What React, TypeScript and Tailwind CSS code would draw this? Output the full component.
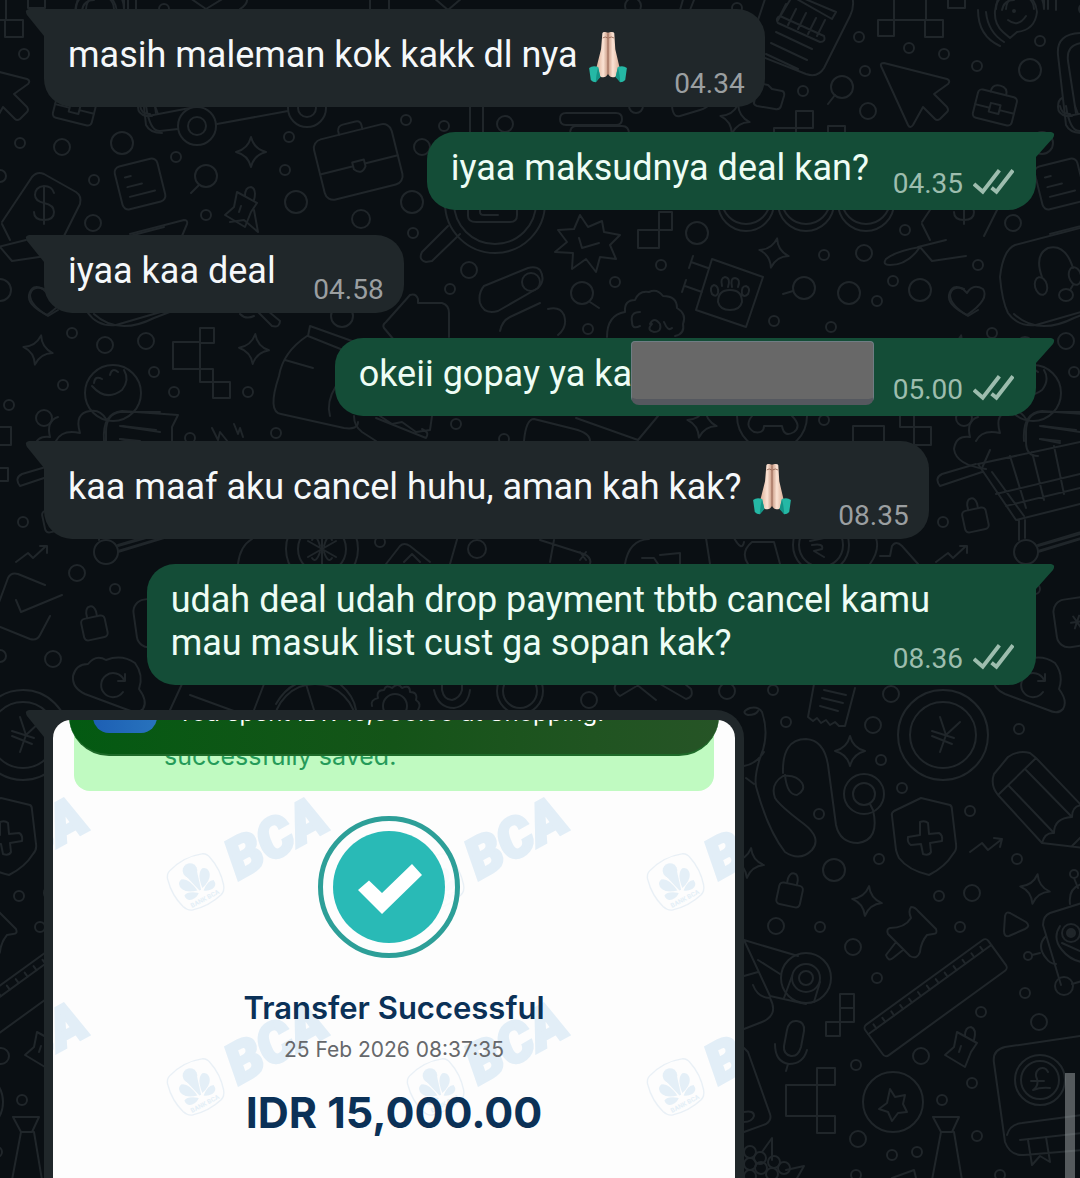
import type { ReactNode } from "react";

const TILE = 920;

// [cx, cy, r]
const dots: number[][] = [
  [24, 54, 5], [20, 143, 5], [62, 147, 8], [122, 143, 11], [176, 157, 5], [94, 180, 5], [93, 223, 8],
  [206, 215, 5], [296, 202, 11], [361, 219, 9], [412, 202, 11], [289, 137, 5], [285, 170, 5], [406, 120, 5],
  [444, 126, 5], [505, 124, 8], [422, 147, 8], [164, 9, 5], [0, 176, 6], [633, 6, 8], [737, 8, 5],
  [859, 37, 5], [909, 48, 5], [865, 71, 5], [803, 91, 5], [868, 111, 8], [57, 66, 5], [110, 70, 11],
  [120, 41, 5], [636, 106, 7], [0, 290, 11], [413, 233, 5], [469, 270, 8], [450, 289, 5], [72, 333, 5],
  [105, 345, 8], [146, 341, 8], [154, 372, 5], [63, 385, 5], [174, 392, 5], [248, 392, 5], [9, 405, 5],
  [44, 418, 8], [276, 433, 5], [190, 438, 5], [342, 316, 11], [456, 424, 5], [504, 439, 5], [23, 522, 5],
  [380, 542, 5], [531, 282, 9], [697, 233, 11], [661, 265, 5], [615, 282, 5], [824, 255, 5], [864, 253, 8],
  [893, 281, 5], [877, 301, 5], [849, 293, 11], [774, 321, 5], [831, 327, 5], [588, 329, 5], [905, 230, 5],
  [58, 265, 5], [824, 420, 5], [77, 573, 8], [115, 589, 5], [53, 659, 8], [0, 656, 6], [477, 549, 9],
  [589, 700, 8], [727, 691, 8], [773, 690, 5], [891, 694, 8], [786, 722, 5], [873, 725, 8], [881, 760, 5],
  [99, 729, 5], [902, 788, 5], [819, 814, 5], [879, 859, 5], [834, 870, 11], [50, 811, 5], [19, 896, 5],
  [52, 893, 8], [97, 859, 5], [40, 927, 5], [853, 947, 8], [877, 978, 5], [820, 927, 5], [776, 926, 8],
  [61, 1012, 5], [119, 1022, 8], [105, 993, 5], [1, 1056, 8], [856, 1065, 5], [52, 1083, 5], [22, 1100, 5],
  [57, 1136, 5], [858, 1139, 8], [892, 1155, 5], [917, 1152, 5], [144, 986, 9], [108, 956, 4], [154, 874, 4],
  [856, 1175, 5], [80, 1175, 5],
];

// [x, y, rotation]
const sparkles: number[][] = [
  [251, 152, 0], [735, 119, 12], [38, 350, 12], [254, 349, 5], [774, 253, 12], [702, 423, 12],
  [850, 751, 0], [867, 901, 8], [115, 889, 10], [749, 863, 8],
];

const squares: number[][] = [
  [5, 20, 18, 17], [878, 20, 16, 16], [28, -8, 17, 16], [796, 111, 17, 17], [828, 126, 17, 17],
  [774, 128, 22, 18], [638, 230, 21, 18], [659, 212, 13, 18], [200, 328, 14, 15], [173, 342, 27, 27],
  [200, 369, 13, 13], [213, 382, 17, 16], [-6, 468, 14, 13], [853, 426, 31, 30],
  [900, 410, 14, 17], [914, 427, 17, 18], [840, 994, 14, 14], [840, 1008, 14, 14], [826, 1022, 14, 14],
  [786, 1085, 31, 31], [817, 1068, 18, 17], [817, 1116, 18, 17],
];

const paths = [
  // joins between the pixel squares
  "M6 20V-4M894 20V-4M894 20H924M-26 20H5",
  // top edge scraps
  "M76 9a24 24 0 0 1 48 0M86 9a14 14 0 0 1 28 0M128 9V-4M136 9V-4M190 -2l16 11l18 -11M240 9q10 -6 6 -14M370 9V-4M389 9V-4M434 -2l14 12l14 -12",
  "M680 10l4 -14M690 10l4 -10",
  // bank slip
  "M766 -4L758 20M852 -4q3 10 -2 20L824 68q-6 10 -18 6L760 56M790 0L778 20M798 -4L836 12L832 19L795 -2M786 4l-8 16M796 9l-8 16M806 13l-8 16M816 18l-8 16M825 20l-8 16M780 16l44 20q2 6 -4 6l-42 -19q-3 -5 2 -7M776 32l36 17M771 43l36 17M766 54l32 15",
  // folder
  "M754 103l4 -20l10 2l4 4l10 2q3 1 2 5l-3 10q-1 4 -6 3l-18 -3q-4 -1 -3 -5",
  // cart frame
  "M217 124L288 111M140 106q2 9 10 8M146 106q4 26 14 25l18 -2M148 116l42 -8M155 106l3 8M672 106q1 12 8 10l20 -6q7 -2 9 -6",
  // upright posts, stacked books
  "M470 106V134M483 106V134M566 113h50q6 0 6 6t-6 6h-50q-6 0 -6 -6t6 -6M570 134q0 -8 6 -8h46q7 0 7 8",
  // tag with dollar
  "M2 222L32 177q5 -6 12 -3L76 192q6 4 4 12L64 236M10 240L2 224M54 193q-2 -7 -10 -7q-9 1 -9 9q0 6 9 8q10 2 10 9q0 8 -10 8q-10 0 -10 -8M44 187V224",
  // tag string
  "M26 240L-2 247M0 247l12 14L46 256M0 247q-24 4 -34 12q-4 6 4 6q18 0 30 -18",
  // big magnifier
  "M448 226L422 252q-4 8 4 10l6 -1L460 234M468 208v8q0 6 8 6h34q7 0 7 -7v-7M480 208v4q0 3 4 3h14",
  // paper plane
  "M130 234L184 220q4 0 3 4L182 236M230 222l14 -2l14 12l-4 -22",
  // leaf
  "M30 295q2 -10 14 -6M30 295q0 10 18 21l10 -6M94 314q24 22 60 4L180 308M240 314q6 6 14 2M258 312l14 14q8 2 8 -5l-12 -10",
  // jar
  "M310 326l42 15M310 326l-2 10L348 352M307 336q-24 16 -28 40q-12 36 2 38L344 428q14 2 14 -6M285 360l28 8M330 416q-4 -14 6 -30",
  // hand
  "M384 328q-2 -3 2 -6l24 -27q6 -2 8 4v4h24q7 2 7 10v24M384 328l10 12",
  // pill shapes
  "M484 286L528 268q8 -2 12 2q6 10 -2 18L498 311q-14 4 -18 -8q-2 -10 4 -17M540 303L510 317q-8 4 -10 14M548 309q12 -3 16 6q4 12 -6 20",
  // smiling face and bush
  "M94 383q1 -8 8 -4M110 375q2 -8 8 -3M92 386q14 16 30 4q8 -10 2 -20M56 441q6 -12 24 -8q-6 -20 10 -22q10 -2 16 8M104 441q-2 -28 18 -30l56 4l-6 12v14M122 426l34 4M120 439l20 2M212 428l6 12l2 -8l8 10M234 424l4 10l2 -6l3 9",
  // sandwich
  "M354 416q0 10 8 16l14 9M376 418l50 20q4 -6 -4 -9M380 416l12 8l10 -2l14 10l14 -2l2 -14M524 441q2 -22 10 -22l40 10q16 4 16 12M576 418l62 22l20 -24",
  // starburst
  "M580 215l8 12l14 -6l2 11l16 3l-10 10l6 14l-16 -2l-4 15l-10 -13l-14 10l1 -16l-18 -1l12 -10l-9 -12l16 -1zM579 238l3 10l17 -5",
  // tree
  "M607 337q0 -22 18 -25q-1 -12 10 -12q4 -10 14 -8q8 -4 14 4q14 0 14 12q10 6 6 16q2 10 -8 12M640 312q-10 0 -8 10q0 8 8 4M650 324q4 -8 10 0q2 8 -6 8q-8 -2 -2 -8M664 322q4 10 8 6",
  // sign board
  "M712 259l51 18l-17 50l-50 -17zM708 268l-17 -6M702 292l-17 -6M693 256l-4 12M686 280l-4 12",
  "M718 302q0 -12 12 -12t12 12q-2 8 -12 8t-12 -8M712 294q-3 -7 2 -9q5 1 4 8q-2 5 -6 1M722 286q-2 -8 3 -9q6 1 3 10M732 287q-2 -9 3 -9q6 1 3 9M742 294q-1 -8 4 -8q5 2 2 8q-4 4 -6 0",
  // hearts
  "M47 315q-20 -10 -18 -20q3 -12 14 -6l4 4q6 -10 16 -4q7 10 -16 26",
  "M66 469q-30 -4 -32 -20q2 -14 16 -12q-4 -16 8 -20M62 468l8 -18",
  // chat card on the right
  "M160 412h-40q-14 2 -14 20v10q0 14 12 14M120 426l40 6M120 439l20 4",
  // cart
  "M58 464l102 -22M58 464l38 56l64 -16M72 472l32 44M20 486l42 -14M20 486q-6 -8 2 -12L56 464M90 456l16 52M112 452l12 48M134 446l10 48M76 494l84 -20M86 506l74 -18M99 520v20M105 520v18M118 545l60 -18M118 551l60 -18",
  // arrow card, chart card, receipts behind the wide bubble
  "M238 564q2 -18 14 -25M386 564l14 -18q4 -4 10 0l20 16M404 562l8 -8l8 8M450 564l8 -28M554 540l-4 22M540 540l44 14q8 4 6 10M580 552l6 8M586 552l-6 8M625 564q4 -24 24 -25M642 558h12l4 6M660 555l20 -2v11M706 538l4 26M734 538q8 14 10 4M748 564q-8 -12 4 -22h22l6 22M876 538q4 12 -6 26M880 556h10l2 -10q4 -6 10 0l16 18M810 537l14 -3M810 541l14 -3M812 545q12 -2 10 4l-8 2l10 6",
  "M118 546l42 -12M118 552l46 -14",
  // trend arrows
  "M16 562l12 -9l5 5l13 -12M40 546h7v7M50 852l12 -9l6 7l14 -11M74 838l8 1l-2 8",
  // task card
  "M45 585L18 574q-7 -2 -10 4L-2 605M16 600l5 12l41 -17M-2 626l32 13q7 2 10 -4l10 -19",
  // cloud
  "M128 710L85 694q-13 -6 -12 -18q3 -12 15 -12q8 -10 18 -4q16 -6 29 3q9 12 4 26q9 12 4 20q-5 6 -15 1M124 680a12 12 0 1 0 -1 12M125 674v7h-7",
  // strip above the picture
  "M170 710l12 -26M190 695l52 19M254 710l10 -26M276 704q8 -14 20 -20M306 684l8 26M340 684q14 12 16 26M434 690q4 18 20 18q14 -2 16 -18M442 684v6q2 10 10 10q8 -2 10 -10v-6M660 684l26 15q8 -2 5 -10l-6 -5M636 684l20 16M640 684l-20 12q-8 -6 -4 -12",
  "M372 706q-2 -6 6 -8q-2 -8 6 -8q2 -6 8 -2q6 -6 10 0q8 -4 8 4q8 0 6 8q6 4 2 10",
  // yen
  "M20 717l6 18M40 722l-14 13l-6 17M12 731l22 7M12 736l20 8",
  // receipt strip
  "M814 684l-6 33l5 4l4 -3l4 5l5 -3l4 5l5 -3l4 4l6 0l10 -38M824 690l22 5M822 698l21 5M820 706l18 5",
  // cable
  "M783 773q-1 -34 23 -34q18 1 22 26l8 60q4 18 22 18q22 -3 15 -33l-3 -6M785 775q2 20 12 20q9 -5 5 -12q-6 -9 -19 -7q-13 8 -8 22q5 8 29 26q18 14 8 26q-12 12 -27 2q-17 -22 -28 -62q-4 -10 3 -32q10 -23 2 -46q-4 -6 -12 -4q-10 4 -2 7q8 0 10 -4M744 766q12 -2 20 -14M746 778l8 6",
  // shield
  "M921 798l29 7q2 1 2 5l4 34q1 6 -3 10q-8 13 -24 21q-21 -5 -30 -17q-2 -4 -3 -8l-4 -34q-1 -3 2 -5z",
  "M920 822q5 -2 8 1l1 11l10 -1q4 2 3 8l-12 2l1 9q-2 4 -8 2l-2 -10l-10 1q-4 -2 -3 -8l12 -2z",
  // pushpin
  "M911 907q4 0 7 4l18 18q2 5 -3 5l-6 1q-6 7 -7 17q-3 8 -10 4l-22 -22q-2 -5 2 -6q15 0 21 -10q-3 -7 0 -11zM896 942l-10 13q2 7 7 3l10 -8",
  // play
  "M90 913l16 9q5 4 -1 7l-16 7q-5 1 -5 -5l1 -15q1 -5 5 -3",
  // tape
  "M744 940l54 16M744 940l26 56l36 8M744 976l14 -4M758 960l22 14M784 998l8 -22M814 1002l6 -20M753 985q5 13 17 13q9 17 -8 24l-18 7M744 1048l4 4l22 62q2 6 -4 10l-22 8M744 1112q10 -2 10 4q-2 6 -10 6",
  // microphone
  "M787 1030q2 -10 10 -9q8 1 7 10l-3 16q-3 10 -10 9q-8 -2 -7 -10zM775 1044q0 18 14 20q14 0 18 -14M788 1064l-2 7",
  // badge star
  "M890 1089l5 8l10 -2l-2 9l4 8l-9 1l-6 8l-4 -9l-9 -3l8 -6z",
  // bottle
  "M13 1117h26l-7 15h-11zM21 1132L12 1180M34 1132L42 1180",
  // hops
  "M762 1152l10 -14v22M786 1170l18 -4l-8 14M892 1178l22 -8l2 8",
];

const pencil =
  "M998 795L1036 758M998 795Q990 785 994 774L1008 757Q1018 750 1030 753L1036 758L1084 808M998 795L1042 843L1084 848M1009 786L1054 833M1026 770L1072 817M1042 843Q1045 832 1054 833Q1054 818 1072 817Q1072 806 1082 805M1072 846l12 -12";
const robot =
  "M1082 903L1050 913q-7 3 -7 12l18 60M1061 985l-6 -20M1070 904q-2 -16 12 -20M1046 936q-10 10 0 22q4 6 10 6M1032 955l8 -2M1060 926q-8 12 2 24q8 10 20 12M1062 943l18 8M1074 878l4 10M1072 984l10 -3";
const book =
  "M1080 1036L1005 1047q-13 3 -11 16l11 79q5 14 19 13l58 -5M1007 1135q3 -11 15 -12l60 -8M1020 1140l62 -7M1028 1140l4 25l8 -9l10 6l-4 -25M1048 1072q-3 -6 -9 -3q-5 4 -2 10q2 7 -4 11q8 -3 17 -2M1031 1081h13";
const headset =
  "M1084 227L1015 245q-12 5 -15 32q2 24 8 36q10 14 28 12l48 -14M1042 277q-8 -22 6 -29q17 -5 25 20M1073 285l-3 5";
const cursor =
  "M884 63L947 79q4 2 1 5L934 94L947 107q2 3 0 5l-7 7q-3 2 -5 0L923 107L913 125q-3 4 -5 0L881 66q-1 -3 3 -3Z";
const radio =
  "M1003 32q-9 -8 -8 -21q2 -18 20 -19q20 1 22 20q-2 18 -20 20l-7 6zM1002 10q2 -10 12 -10M1008 20q10 8 18 -4M986 12q2 20 18 30M978 10q0 26 22 36M1044 -4v12M1056 -2v12";
const phone = "M1082 33q-26 0 -24 22l8 70q4 8 16 8M1082 43q-16 2 -14 18l8 52M1062 98q-4 2 -4 9t8 9h6";

function Wallpaper() {
  return (
    <svg
      className="pointer-events-none absolute inset-0 h-full w-full"
      fill="none"
      stroke="#20262a"
      strokeWidth="2"
      strokeLinecap="round"
      strokeLinejoin="round"
      aria-hidden="true"
    >
      <defs>
        <path id="sparkle" d="M0-15Q3-3 15 0Q3 3 0 15Q-3 3-15 0Q-3-3 0-15Z" />
        <g id="lock">
          <rect x="-12" y="-9" width="24" height="22" rx="4" />
          <path d="M-5 -9v-5q1 -6 5 -6t5 6v5" />
        </g>
        <path id="pin" d="M-3 -16L17 -5L11 4L5 19L-15 7L-6 -1ZM5 -12q0 -9 6 -9q6 2 3 13M1 -2l-2 6" />
        <g id="note">
          <rect x="-22" y="-22" width="44" height="44" rx="6" />
          <path d="M-13 -10h6M-13 0h15M-13 10h26" />
        </g>
        <g id="tile">
          {dots.map(([x, y, r], i) => (
            <circle key={i} cx={x} cy={y} r={r} />
          ))}
          {sparkles.map(([x, y, deg], i) => (
            <use key={i} href="#sparkle" transform={`translate(${x} ${y}) rotate(${deg})`} />
          ))}
          {squares.map(([x, y, w, h], i) => (
            <rect key={i} x={x} y={y} width={w} height={h} />
          ))}
          {paths.map((d, i) => (
            <path key={i} d={d} />
          ))}
          <g transform={`translate(${-TILE} 0)`}>
            <path d={pencil} />
            <path d={robot} />
            <path d={book} />
            <path d={headset} />
            <path d={cursor} />
            <path d={radio} />
            <path d={phone} />
            <circle cx="1071" cy="933" r="9" />
            <circle cx="1071" cy="933" r="4" fill="#20262a" />
            <circle cx="1014" cy="11" r="1" />
            <ellipse cx="1041" cy="286" rx="6" ry="9" transform="rotate(-15 1041 286)" />
            <ellipse cx="1075" cy="276" rx="6" ry="9" transform="rotate(-15 1075 276)" />
            <ellipse cx="1066" cy="295" rx="7" ry="6" />
            <circle cx="1040" cy="1080" r="25" />
            <circle cx="1040" cy="1080" r="19" />
          </g>
          {/* magnifiers */}
          <circle cx="206" cy="176" r="11" />
          <path d="M199 185L191 193M835 95L828 104M590 302L599 308M793 291L783 294" />
          <circle cx="842" cy="87" r="11" />
          <circle cx="582" cy="293" r="11" />
          <circle cx="804" cy="288" r="11" />
          <circle cx="495" cy="203" r="50" />
          <circle cx="495" cy="203" r="41" />
          {/* wheels */}
          <circle cx="197" cy="126" r="19" />
          <circle cx="197" cy="126" r="9" />
          <circle cx="307" cy="108" r="19" />
          <circle cx="307" cy="108" r="9" />
          <circle cx="106" cy="552" r="12" />
          {/* coins */}
          <circle cx="23" cy="735" r="45" />
          <circle cx="23" cy="735" r="33" />
          <circle cx="322" cy="549" r="36" />
          <circle cx="322" cy="549" r="24" />
          <path d="M322 549l-14 -8M322 549l14 -8M322 549l-14 8M322 549l14 8M322 549v-16M322 549v16M312 540q4 -8 8 6M332 540q-4 -8 -8 6M312 558q4 6 8 -6M332 558q-4 6 -8 -6" />
          <circle cx="821" cy="545" r="28" />
          <circle cx="821" cy="545" r="22" />
          <circle cx="395" cy="706" r="12" />
          <circle cx="520" cy="691" r="23" />
          <circle cx="520" cy="691" r="17" />
          <circle cx="315" cy="725" r="41" />
          <circle cx="746" cy="203" r="28" />
          <circle cx="806" cy="203" r="28" />
          <circle cx="866" cy="203" r="28" />
          <circle cx="746" cy="200" r="24" />
          <circle cx="806" cy="200" r="24" />
          <circle cx="866" cy="200" r="24" />
          <circle cx="772" cy="416" r="35" />
          <path d="M752 416q-8 10 2 16q10 2 10 -6h18q2 12 12 6q8 -6 -2 -16" />
          <circle cx="113" cy="393" r="28" />
          <circle cx="864" cy="794" r="20" />
          <circle cx="864" cy="794" r="11" />
          <circle cx="806" cy="978" r="25" />
          <circle cx="806" cy="978" r="14" />
          <circle cx="806" cy="978" r="7" />
          <circle cx="893" cy="1102" r="30" />
          {[[750, 1152], [760, 1158], [750, 1164], [761, 1168], [774, 1162], [772, 1174], [784, 1168], [750, 1176]].map(
            ([x, y], i) => (
              <circle key={i} cx={x} cy={y} r="6" />
            ),
          )}
          {/* ruler */}
          <g transform="translate(863 1027) rotate(-36)">
            <rect width="152" height="38" rx="4" />
            <path d="M0 9H152" />
            {Array.from({ length: 13 }, (_, i) => (
              <path key={i} d={`M${10 + i * 11} 4v5`} />
            ))}
          </g>
          {/* briefcases */}
          <g transform="translate(358 161) rotate(-14)">
            <rect x="-40" y="-30" width="80" height="62" rx="9" />
            <path d="M-12 -30v-4q1 -5 6 -5h13q5 0 5 5v4M-40 4H-6M6 4H40M-6 0h12v7q-6 8 -12 0z" />
          </g>
          <g transform="translate(75 107) rotate(14)">
            <rect x="-20" y="-14" width="40" height="29" rx="4" />
            <path d="M-8 -14q0 -8 8 -8t8 8M-20 2H-5M5 2H20M-5 -3h10v9h-10z" />
          </g>
          <use href="#note" transform="translate(140 184) rotate(-14)" />
          <use href="#pin" transform="translate(240 208)" />
          <use href="#pin" transform="translate(40 1048)" />
          <use href="#lock" transform="translate(94 626) rotate(-12)" />
          <use href="#lock" transform="translate(55 518) rotate(-12)" />
          <use href="#lock" transform="translate(790 893) rotate(12)" />
          <g transform="translate(157 622) rotate(-8)">
            <rect x="-22" y="-24" width="46" height="48" rx="12" />
            <path d="M-6 0h12M-3 -6l6 12M3 -6l-6 12" />
          </g>
        </g>
      </defs>
      {[-1, 0, 1, 2].map((n) => (
        <use key={n} href="#tile" x={n * TILE} />
      ))}
    </svg>
  );
}

function Hands() {
  return (
    <svg className="ml-[10px] inline-block h-[53px] w-10 align-middle" viewBox="54 27 120 160" role="img" aria-label="🙏🏻">
      <defs>
        <linearGradient id="skin" x1="0" x2="1">
          <stop offset="0" stopColor="#d9ab93" />
          <stop offset="0.3" stopColor="#fbe3d4" />
          <stop offset="0.5" stopColor="#c99a84" />
          <stop offset="0.7" stopColor="#fbe3d4" />
          <stop offset="1" stopColor="#d9ab93" />
        </linearGradient>
      </defs>
      <path
        d="M97 34Q98 29 106 30L114 32L122 30Q132 29 133 34L136 82L150 142L138 164Q122 172 114 156Q106 172 90 164L78 142L93 82Z"
        fill="url(#skin)"
      />
      <path d="M114 34V158M98 48Q106 42 113 48M116 48Q124 42 132 48" fill="none" stroke="#8f5f4d" strokeWidth="2.5" />
      <path d="M57 139Q68 130 84 136L91 166Q84 172 77 182Q68 182 62 175Z" fill="#25b8a5" />
      <path d="M171 139Q160 130 144 136L137 166Q144 172 151 182Q160 182 166 175Z" fill="#25b8a5" />
      <path d="M84 136L91 166L77 182Q78 160 84 136M144 136L137 166L151 182Q150 160 144 136" fill="#159486" />
    </svg>
  );
}

function Ticks() {
  return (
    <svg className="h-[27px] w-[41px]" viewBox="0 0 42 27" fill="none" stroke="#9dbdae" strokeWidth="4" aria-label="Delivered">
      <path d="M1 16L10 24L27 2M19 20L24 24L41 2" />
    </svg>
  );
}

type BubbleProps = {
  out?: boolean;
  time: string;
  textClass: string;
  children: ReactNode;
};

function Bubble({ out, time, textClass, children }: BubbleProps) {
  return (
    <li
      className={
        out
          ? "relative grid w-fit self-end rounded-[28px] rounded-tr-none bg-[#144d37] pr-[22px] pl-6 text-[#eefdf5]"
          : "relative grid w-fit self-start rounded-[28px] rounded-tl-none bg-[#20272a] pr-5 pl-6 text-[#f5f8fa]"
      }
    >
      <Tail out={out} />
      <p className={`col-start-1 row-start-1 pt-[15px] pb-5 text-[36px] ${textClass}`}>{children}</p>
      <div
        className={
          out
            ? "col-start-1 row-start-1 flex items-start gap-[10px] self-end justify-self-end pb-[10px] text-[28px] leading-8 text-[#9dbdae]"
            : "col-start-1 row-start-1 self-end justify-self-end pb-[7px] text-[28px] leading-8 text-[#9b9fa1]"
        }
      >
        <time>{time}</time>
        {out && <Ticks />}
      </div>
    </li>
  );
}

function Tail({ out }: { out?: boolean }) {
  return out ? (
    <svg className="absolute top-0 left-full -ml-px h-7 w-5" viewBox="0 0 20 28" fill="#144d37" aria-hidden="true">
      <path d="M0 0H16Q21 1 18 6L1 25V28H0Z" />
    </svg>
  ) : (
    <svg className="absolute top-0 right-full -mr-px h-7 w-5" viewBox="0 0 20 28" fill="#20272a" aria-hidden="true">
      <path d="M20 0H4Q-1 1 2 6L19 27H20Z" />
    </svg>
  );
}

function Watermark() {
  const rows = [118, 323];
  const cols = [-16, 224, 464, 704];
  return (
    <svg className="absolute top-0 left-0 h-full w-full" aria-hidden="true">
      {rows.map((y) =>
        cols.map((x) => (
          <g key={`${x}-${y}`}>
            <text
              transform={`translate(${x + 8} ${y + 16}) rotate(-29)`}
              textAnchor="middle"
              className="fill-[#e2eef7] stroke-[#e2eef7] stroke-3 font-['Roboto'] text-[55px] font-black italic"
            >
              BCA
            </text>
            <g transform={`translate(${x - 81} ${y + 44}) rotate(-28) scale(0.92)`} fill="#e4eff7">
              <path
                d="M-20 -24Q0 -31 20 -24Q25 -22 26 -16Q30 0 25 17Q23 23 18 25Q0 30 -18 25Q-23 23 -25 17Q-30 0 -26 -16Q-25 -22 -20 -24Z"
                fill="none"
                stroke="#e9f0f6"
                strokeWidth="1.5"
              />
              <circle cx="0" cy="-14" r="8" />
              <path d="M-7 -12H7L1 10H-1Z" />
              <path d="M-3 9Q-5 -8 -13 -10Q-20 -8 -17 0Q-14 6 -3 9ZM3 9Q5 -8 13 -10Q20 -8 17 0Q14 6 3 9Z" />
              <path d="M-3 12Q-12 4 -18 7Q-19 14 -12 15Q-6 15 -3 12ZM3 12Q12 4 18 7Q19 14 12 15Q6 15 3 12Z" />
              <text y="23" textAnchor="middle" className="font-['Roboto'] text-[7px] font-bold">
                BANK BCA
              </text>
            </g>
          </g>
        )),
      )}
    </svg>
  );
}

function Receipt() {
  return (
    <figure className="relative h-[640px] w-[682px] overflow-hidden rounded-[18px] bg-[#fdfdfd] font-['Inter','Liberation_Sans',sans-serif]">
      <Watermark />
      <div className="relative mx-[21px] h-[71px] rounded-b-[16px] bg-[#c0fac1] pt-[20px] pl-[90px] text-[25px] leading-8 text-[#259b59]">
        successfully saved.
      </div>
      <div className="absolute -top-10 right-4 left-4 flex h-[76px] items-start gap-[20px] rounded-b-[40px] border-b-2 border-[#1f6a2a] bg-linear-to-r from-[#035a12] via-[#145418] to-[#265426] pl-6 text-white">
        <span className="h-[53px] w-16 rounded-b-[16px] bg-linear-to-r from-[#1d5fb4] to-[#2873bd]" />
        <span className="pt-[17px] text-[24px] leading-8 whitespace-nowrap">You spent IDR 15,000.00 at Shopping.</span>
      </div>
      <svg className="relative mt-6 ml-[264px] h-[144px] w-[144px]" viewBox="0 0 144 144" aria-label="Success">
        <circle cx="72" cy="72" r="68.5" fill="#fdfdfd" fillOpacity="0.8" stroke="#2d9f98" strokeWidth="5" />
        <circle cx="72" cy="72" r="56" fill="#29bab6" />
        <path d="M41 75L52 65.500L65 78L95 49L105 60L65 99Z" fill="#fff" />
      </svg>
      <figcaption className="relative flex w-[682px] flex-col items-center text-center">
        <strong className="mt-[31px] text-[31px] leading-9 font-semibold text-[#0b3157]">Transfer Successful</strong>
        <span className="mt-[10px] text-[21px] leading-7 text-[#66686b]">25 Feb 2026 08:37:35</span>
        <span className="mt-[22px] text-[43px] leading-[52px] font-bold text-[#0b3157]">IDR 15,000.00</span>
      </figcaption>
    </figure>
  );
}

export default function App() {
  return (
    <main className="relative h-screen overflow-hidden bg-[#0a0f13] font-['Roboto','Liberation_Sans',sans-serif]">
      <Wallpaper />
      <ul className="relative flex flex-col gap-[25px] px-11 pt-[9px]">
        <Bubble time="04.34" textClass="leading-[63px] pr-[117px]">
          masih maleman kok kakk dl nya
          <Hands />
        </Bubble>
        <Bubble out time="04.35" textClass="leading-[43px] pr-[145px]">
          iyaa maksudnya deal kan?
        </Bubble>
        <Bubble time="04.58" textClass="leading-[43px] pr-[108px]">
          iyaa kaa deal
        </Bubble>
        <Bubble out time="05.00" textClass="flex items-center leading-[43px] pr-[140px]">
          okeii gopay ya ka
          <span className="-mt-[14px] -mb-[10px] -ml-px h-16 w-[243px] rounded-[4px] rounded-b-[8px] border border-b-[6px] border-[#6f7d84] border-b-[#55585f] bg-[#686868]" />
        </Bubble>
        <Bubble time="08.35" textClass="leading-[63px] pr-[117px]">
          kaa maaf aku cancel huhu, aman kah kak?
          <Hands />
        </Bubble>
        <Bubble out time="08.36" textClass="leading-[43px] pr-[84px] whitespace-pre-line">
          {"udah deal udah drop payment tbtb cancel kamu\nmau masuk list cust ga sopan kak?"}
        </Bubble>
        <li className="relative w-fit self-start rounded-[28px] rounded-tl-none bg-[#20272a] px-[9px] py-[10px]">
          <Tail />
          <Receipt />
        </li>
      </ul>
      <div className="absolute right-[5px] bottom-0 h-[105px] w-[10px] bg-[#a0a6a8]/50" />
    </main>
  );
}
